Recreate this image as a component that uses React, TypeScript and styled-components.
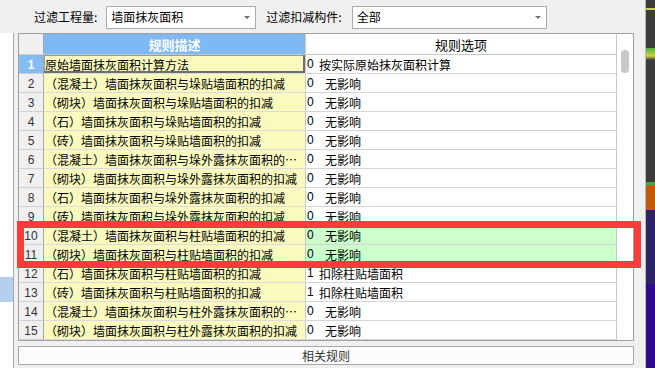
import { createGlobalStyle } from 'styled-components';
import styled from 'styled-components';

const GlobalStyle = createGlobalStyle`
  html, body {
    margin: 0;
    padding: 0;
    background: #f0f0f0;
  }
  body {
    font-family: "Noto Sans CJK SC", "Liberation Sans", sans-serif;
    font-size: 12px;
    color: #000;
  }
`;

const Window = styled.div`
  width: 655px;
  height: 368px;
  display: flex;
  background: #f0f0f0;
  overflow: hidden;
`;

const Content = styled.div`
  flex: 1;
  display: flex;
  flex-direction: column;
  min-width: 0;
`;

const Toolbar = styled.div`
  height: 33px;
  display: flex;
  align-items: center;
  padding-left: 34px;
  flex-shrink: 0;
`;

const FilterLabel = styled.span`
  line-height: 16px;
  margin-right: ${props => props.$gap}px;
  white-space: nowrap;
`;

const Select = styled.div`
  box-sizing: border-box;
  width: ${props => props.$width}px;
  height: 23px;
  margin-top: 1px;
  margin-right: 10px;
  border: 1px solid #acacac;
  background: #fff;
  display: flex;
  align-items: center;
  justify-content: space-between;
  padding: 0 5px 0 4px;
  line-height: 16px;
`;

const Caret = styled.span`
  width: 0;
  height: 0;
  border-left: 3px solid transparent;
  border-right: 3px solid transparent;
  border-top: 3px solid #707070;
`;

const Body = styled.div`
  flex: 1;
  display: flex;
  min-height: 0;
`;

const SidePanel = styled.div`
  width: 13px;
  background: #fff;
  border-right: 1px solid #a8a8a8;
  display: flex;
  flex-direction: column;
`;

const SideItem = styled.div`
  margin-top: 244px;
  height: 25px;
  background: #b4cfee;
`;

const Main = styled.div`
  flex: 1;
  padding: 0 11px 0 4px;
  display: flex;
  flex-direction: column;
`;

const GridBox = styled.div`
  position: relative;
  display: flex;
  border: 1px solid #a0a0a0;
  background: #fff;
`;

const Table = styled.div`
  display: flex;
  flex-direction: column;
`;

const Row = styled.div`
  display: flex;
  height: ${props => props.$height}px;
`;

const RowHead = styled.div`
  box-sizing: border-box;
  width: 25px;
  background: ${props => (props.$active ? '#84bcf2' : '#f0f0f0')};
  color: ${props => (props.$active ? '#fff' : '#333')};
  font-family: "Liberation Sans", sans-serif;
  font-weight: ${props => (props.$active ? 700 : 400)};
  border-right: 1px solid #a8a8a8;
  border-bottom: 1px solid #d0d0d0;
  display: flex;
  align-items: center;
  justify-content: center;
  padding-top: 1px;
`;

const HeadCell = styled.div`
  box-sizing: border-box;
  width: ${props => props.$width}px;
  background: ${props => (props.$accent ? '#7fb9f3' : '#fff')};
  color: ${props => (props.$accent ? '#fff' : '#000')};
  font-weight: ${props => (props.$accent ? 700 : 400)};
  border-right: 1px solid #c8c8c8;
  border-bottom: 1px solid #c8c8c8;
  display: flex;
  align-items: center;
  justify-content: center;
  font-size: 13px;
`;

const DescCell = styled.div`
  box-sizing: border-box;
  width: 262px;
  background: #fafabe;
  border-right: 1px solid #c8c8c8;
  border-bottom: 1px solid #dcdcdc;
  padding-left: 1px;
  display: flex;
  align-items: center;
  box-shadow: ${props =>
    props.$selected ? 'inset -2px -2px 0 #6e6e6e, inset 1px 1px 0 #9a9a9a' : 'none'};
`;

const DescText = styled.span`
  white-space: nowrap;
  line-height: 17px;
`;

const OptCell = styled.div`
  box-sizing: border-box;
  width: 311px;
  background: ${props => (props.$changed ? '#ccffcc' : '#fff')};
  border-right: 1px solid #c8c8c8;
  border-bottom: 1px solid #d4d4d4;
  padding-left: 1px;
  display: flex;
  align-items: center;
  line-height: 17px;
`;

const OptCode = styled.span`
  width: 12px;
  font-family: "Liberation Sans", sans-serif;
`;

const OptLabel = styled.span`
  padding-left: ${props => props.$indent}px;
  white-space: nowrap;
`;

const ScrollTrack = styled.div`
  box-sizing: border-box;
  width: 16px;
  background: #fff;
  padding: 16px 0 0 4px;
`;

const ScrollThumb = styled.div`
  width: 8px;
  height: 23px;
  border-radius: 4px;
  background: #c9c9c9;
`;

const Highlight = styled.div`
  position: absolute;
  left: -2px;
  top: 187px;
  width: 624px;
  height: 47px;
  box-sizing: border-box;
  border: 7px solid #ff3b3b;
  pointer-events: none;
`;

const RelatedButton = styled.button`
  margin-top: 5px;
  height: 19px;
  width: 616px;
  box-sizing: border-box;
  border: 1px solid #a8a8a8;
  background: #fcfcfc;
  color: #333;
  font-family: "Noto Sans CJK SC", sans-serif;
  font-size: 12px;
  padding: 0;
  line-height: 17px;
`;

const EdgeStrip = styled.div`
  width: 9px;
  flex-shrink: 0;
  border-left: 1px solid #b8b8b8;
  background: linear-gradient(
    to bottom,
    #3c3c3c 0px,
    #3c3c3c 8px,
    #c8d040 8px,
    #c8d040 10px,
    #3c3c3c 10px,
    #3c3c3c 48px,
    #50b040 48px,
    #d0d040 56px,
    #3c3c3c 60px,
    #3c3c3c 182px,
    #40a840 182px,
    #40a840 186px,
    #c05a08 186px,
    #c05a08 210px,
    #2c2466 210px,
    #2c2466 284px,
    #2e0a8c 284px,
    #2e0a8c 368px
  );
`;

// rows 6 and 14 are shown clipped in the grid, as the reference does
const rules = [
  { desc: '原始墙面抹灰面积计算方法', code: '0', option: '按实际原始抹灰面积计算', indent: 0 },
  { desc: '（混凝土）墙面抹灰面积与垛贴墙面积的扣减', code: '0', option: '无影响', indent: 6 },
  { desc: '（砌块）墙面抹灰面积与垛贴墙面积的扣减', code: '0', option: '无影响', indent: 6 },
  { desc: '（石）墙面抹灰面积与垛贴墙面积的扣减', code: '0', option: '无影响', indent: 6 },
  { desc: '（砖）墙面抹灰面积与垛贴墙面积的扣减', code: '0', option: '无影响', indent: 6 },
  { desc: '（混凝土）墙面抹灰面积与垛外露抹灰面积的…', code: '0', option: '无影响', indent: 6 },
  { desc: '（砌块）墙面抹灰面积与垛外露抹灰面积的扣减', code: '0', option: '无影响', indent: 6 },
  { desc: '（石）墙面抹灰面积与垛外露抹灰面积的扣减', code: '0', option: '无影响', indent: 6 },
  { desc: '（砖）墙面抹灰面积与垛外露抹灰面积的扣减', code: '0', option: '无影响', indent: 6 },
  { desc: '（混凝土）墙面抹灰面积与柱贴墙面积的扣减', code: '0', option: '无影响', indent: 6, changed: true },
  { desc: '（砌块）墙面抹灰面积与柱贴墙面积的扣减', code: '0', option: '无影响', indent: 6, changed: true },
  { desc: '（石）墙面抹灰面积与柱贴墙面积的扣减', code: '1', option: '扣除柱贴墙面积', indent: 0 },
  { desc: '（砖）墙面抹灰面积与柱贴墙面积的扣减', code: '1', option: '扣除柱贴墙面积', indent: 0 },
  { desc: '（混凝土）墙面抹灰面积与柱外露抹灰面积的…', code: '0', option: '无影响', indent: 6 },
  { desc: '（砌块）墙面抹灰面积与柱外露抹灰面积的扣减', code: '0', option: '无影响', indent: 6 },
];

const App: React.FC = () => {
  return (
    <>
      <GlobalStyle />
      <Window>
        <Content>
          <Toolbar>
            <FilterLabel $gap={9}>过滤工程量:</FilterLabel>
            <Select $width={150}>
              <span>墙面抹灰面积</span>
              <Caret />
            </Select>
            <FilterLabel $gap={10}>过滤扣减构件:</FilterLabel>
            <Select $width={195}>
              <span>全部</span>
              <Caret />
            </Select>
          </Toolbar>
          <Body>
            <SidePanel>
              <SideItem />
            </SidePanel>
            <Main>
              <GridBox>
                <Table>
                  <Row $height={21}>
                    <RowHead />
                    <HeadCell $width={262} $accent>规则描述</HeadCell>
                    <HeadCell $width={311}>规则选项</HeadCell>
                  </Row>
                  {rules.map((rule, i) => (
                    <Row key={i} $height={19}>
                      <RowHead $active={i === 0}>{i + 1}</RowHead>
                      <DescCell $selected={i === 0}>
                        <DescText>{rule.desc}</DescText>
                      </DescCell>
                      <OptCell $changed={rule.changed}>
                        <OptCode>{rule.code}</OptCode>
                        <OptLabel $indent={rule.indent}>{rule.option}</OptLabel>
                      </OptCell>
                    </Row>
                  ))}
                </Table>
                <ScrollTrack>
                  <ScrollThumb />
                </ScrollTrack>
                <Highlight />
              </GridBox>
              <RelatedButton>相关规则</RelatedButton>
            </Main>
          </Body>
        </Content>
        <EdgeStrip />
      </Window>
    </>
  );
};

export default App;
